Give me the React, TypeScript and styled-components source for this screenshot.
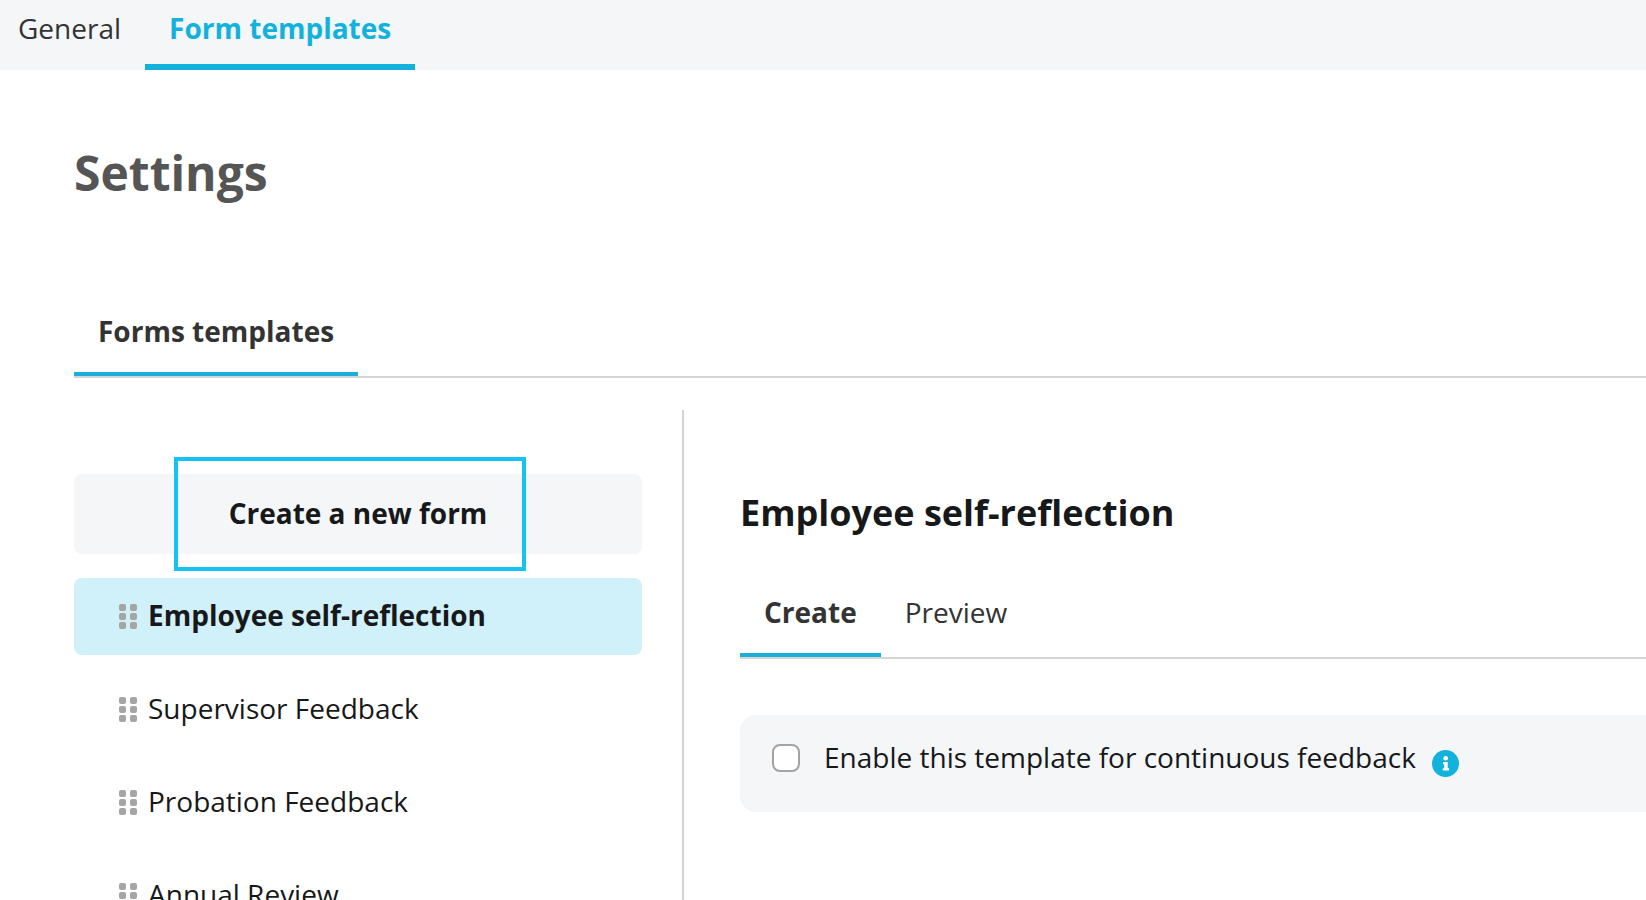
import React, { useState } from "react";
import styled, { createGlobalStyle } from "styled-components";

const GlobalStyle = createGlobalStyle`
  *, *::before, *::after { box-sizing: border-box; }
  body {
    margin: 0;
    background: #fff;
    color: #17181a;
    font: 28px/36px "Open Sans", "Noto Sans", sans-serif;
  }
  button { font: inherit; color: inherit; cursor: pointer; }
`;

const Page = styled.div`
  height: 100vh;
  overflow: hidden;
`;

const TopNav = styled.nav`
  display: flex;
  height: 70px;
  background: #f4f6f8;
`;

const TopLink = styled.a<{ $active?: boolean }>`
  padding: 10px 24px 0;
  border-bottom: 6px solid ${(p) => (p.$active ? "#12b2dd" : "transparent")};
  color: ${(p) => (p.$active ? "#12b2dd" : "#333")};
  font-weight: ${(p) => (p.$active ? 700 : 400)};
  text-decoration: none;
  white-space: nowrap;
  &:first-child { padding-left: 18px; }
`;

const Main = styled.main`
  padding: 70px 0 0 74px;
`;

const PageTitle = styled.h1`
  margin: 0;
  color: #555;
  font-size: 48px;
  line-height: 66px;
`;

const Tabs = styled.div`
  display: flex;
  border-bottom: 2px solid #d5d5d5;
`;

const SectionTabs = styled(Tabs)`
  margin-top: 88px;
`;

const Tab = styled.button<{ $active?: boolean }>`
  padding: 19px 24px 23px;
  border: 0;
  border-bottom: 4px solid ${(p) => (p.$active ? "#1aafd8" : "transparent")};
  background: none;
  color: #333;
  font-weight: ${(p) => (p.$active ? 700 : 400)};
  white-space: nowrap;
`;

const Columns = styled.div`
  display: flex;
  margin-top: 32px;
`;

const Sidebar = styled.aside`
  flex: 0 0 610px;
  min-height: calc(100vh - 410px);
  padding: 64px 40px 0 0;
  border-right: 2px solid #d5d5d5;
`;

const CreateButton = styled.button`
  position: relative;
  display: block;
  width: 100%;
  height: 80px;
  padding: 0 0 2px;
  border: 0;
  border-radius: 8px;
  background: #f4f6f8;
  font-weight: 700;
`;

const Highlight = styled.span`
  position: absolute;
  inset: -17px 116px -17px 100px;
  border: 4px solid #14c3f3;
`;

const FormList = styled.ul`
  display: flex;
  flex-direction: column;
  gap: 16px;
  margin: 24px 0 0;
  padding: 0;
  list-style: none;
`;

const FormItem = styled.button<{ $active?: boolean }>`
  display: flex;
  align-items: center;
  gap: 11px;
  width: 100%;
  height: 77px;
  padding: 0 45px;
  border: 0;
  border-radius: 8px;
  background: ${(p) => (p.$active ? "#d0f0fa" : "transparent")};
  font-weight: ${(p) => (p.$active ? 700 : 400)};
  text-align: left;
`;

const FormName = styled.span`
  padding-bottom: 4px;
`;

const Detail = styled.section`
  flex: 1;
  min-width: 0;
  padding: 78px 0 0 56px;
`;

const DetailTitle = styled.h2`
  margin: 0 0 37px;
  font-size: 36px;
  line-height: 50px;
`;

const OptionPanel = styled.div`
  display: flex;
  align-items: flex-start;
  height: 97px;
  margin-top: 56px;
  padding: 24px 32px;
  border-radius: 16px 0 0 16px;
  background: #f4f6f8;
`;

const OptionLabel = styled.label`
  display: flex;
  gap: 24px;
  white-space: nowrap;
`;

const Checkbox = styled.input`
  appearance: none;
  flex: none;
  width: 28px;
  height: 28px;
  margin: 5px 0 0;
  border: 2px solid #a3a3a3;
  border-radius: 8px;
  background: #fff;
  &:checked { border-color: #12b2dd; background: #12b2dd; }
`;

const InfoButton = styled.button`
  margin: 11px 0 0 16px;
  padding: 0;
  border: 0;
  background: none;
  svg { display: block; }
`;

const DragHandle = () => (
  <svg width="18" height="25" viewBox="0 0 18 25" fill="#a5a5a5" aria-hidden="true">
    {[0, 9, 18].map((y) => (
      <React.Fragment key={y}>
        <rect x="0" y={y} width="7" height="7" rx="2" />
        <rect x="11" y={y} width="7" height="7" rx="2" />
      </React.Fragment>
    ))}
  </svg>
);

const InfoIcon = () => (
  <svg width="27" height="27" viewBox="0 0 27 27" aria-hidden="true">
    <circle cx="13.5" cy="13.5" r="13.5" fill="#12b2dd" />
    <circle cx="13.7" cy="8.3" r="2.3" fill="#fff" />
    <path d="M11 12h4.7v6.3H17v2.2h-6.2v-2.2h1.4v-4.1H11z" fill="#fff" />
  </svg>
);

const forms = ["Employee self-reflection", "Supervisor Feedback", "Probation Feedback", "Annual Review"];

export default function App() {
  const [selected, setSelected] = useState(forms[0]);
  const [view, setView] = useState("Create");

  return (
    <Page>
      <GlobalStyle />
      <TopNav>
        <TopLink href="#general">General</TopLink>
        <TopLink href="#form-templates" $active>Form templates</TopLink>
      </TopNav>
      <Main>
        <PageTitle>Settings</PageTitle>
        <SectionTabs>
          <Tab $active>Forms templates</Tab>
        </SectionTabs>
        <Columns>
          <Sidebar>
            <CreateButton>
              Create a new form
              <Highlight />
            </CreateButton>
            <FormList>
              {forms.map((name) => (
                <li key={name}>
                  <FormItem $active={name === selected} onClick={() => setSelected(name)}>
                    <DragHandle />
                    <FormName>{name}</FormName>
                  </FormItem>
                </li>
              ))}
            </FormList>
          </Sidebar>
          <Detail>
            <DetailTitle>{selected}</DetailTitle>
            <Tabs>
              {["Create", "Preview"].map((name) => (
                <Tab key={name} $active={name === view} onClick={() => setView(name)}>
                  {name}
                </Tab>
              ))}
            </Tabs>
            <OptionPanel>
              <OptionLabel htmlFor="continuous">
                <Checkbox id="continuous" type="checkbox" />
                Enable this template for continuous feedback
              </OptionLabel>
              <InfoButton aria-label="More information">
                <InfoIcon />
              </InfoButton>
            </OptionPanel>
          </Detail>
        </Columns>
      </Main>
    </Page>
  );
}
